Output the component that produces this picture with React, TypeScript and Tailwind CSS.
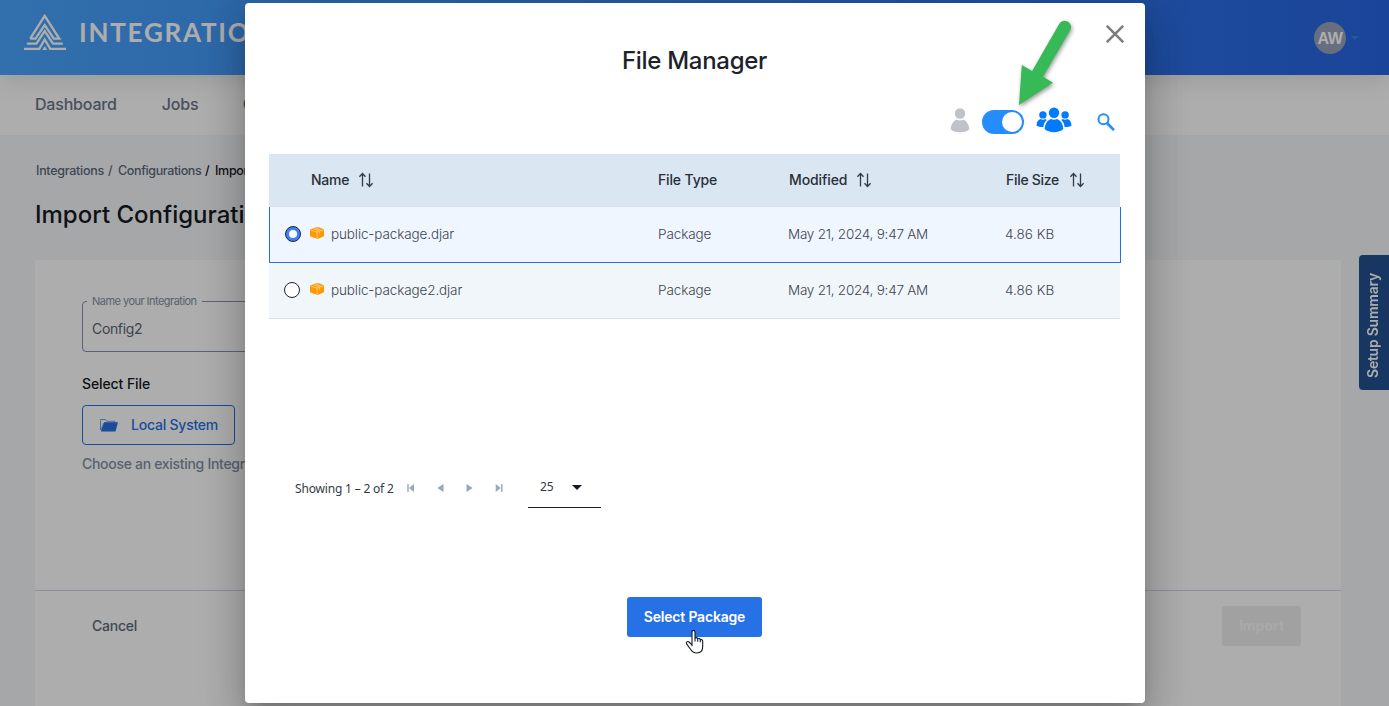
const columns = "grid grid-cols-[389px_130px_217px_1fr]";

function SortIcon() {
  return (
    <svg width="16" height="16" viewBox="0 0 16 16" fill="none" stroke="#343b45" strokeWidth="1.3" className="mt-px">
      <path d="M4.5 14.5V1.6M1.4 4.700 4.500 1.500l3 3.200M11.500 1.500v12.900M8.500 11.300l3 3.200 3.100-3.200" />
    </svg>
  );
}

function PackageIcon() {
  return (
    <svg width="14" height="12" viewBox="0 0 14 12">
      <path d="M0 2.400 6 .2h3l5 2.100v6.900L7.500 12 0 9.200Z" fill="#ff9800" />
      <path d="M.3 2.900 7.100 5.100 13.700 2.800M7.100 5.100v6.700M3.100 1.600l6.600 2.600v3M5.400.9l6.400 2.500" fill="none" stroke="#ffd9a0" strokeWidth=".7" />
    </svg>
  );
}

function Logo() {
  return (
    <svg width="42" height="36" viewBox="0 0 42 36" fill="none" stroke="#fff" strokeWidth="2.3">
      <path d="M6.200 24.600 20.700 1.800l14.600 22.800h-5.400L20.700 11l-9.200 13.600H6.200" />
      <path d="M2.800 29.600h9.600l8.300-12.500L29 29.600h9.800" />
      <path d="M0 34.800h15.300l5.400-9.300 5.500 9.300H42" />
      <path d="m18.300 36 2.400-4 2.500 4Z" fill="#fff" stroke="none" />
    </svg>
  );
}

function PageBehind() {
  return (
    <div className="flex h-full w-full flex-col overflow-hidden bg-[#f5f7fa]">
      <header className="z-10 flex h-[75px] shrink-0 items-start bg-linear-to-r from-[#4aa5ff] via-[#3883ee] to-[#2765e3] shadow-[0_4px_24px_rgba(0,0,0,0.12)]">
        <div className="flex flex-1 pt-[14px] pl-[24px]">
          <Logo />
          <span className="mt-[-2px] ml-[13px] font-['Lato',sans-serif] text-[26px] leading-[40px] font-bold tracking-[1.75px] text-white">
            INTEGRATION
          </span>
        </div>
        <div className="mt-[22px] mr-[30px] flex items-center gap-[5px]">
          <div className="flex size-8 items-center justify-center rounded-full bg-[#99a3b8] pt-px font-['Liberation_Sans',sans-serif] text-[16px] font-bold tracking-[-0.3px] text-white">
            AW
          </div>
          <svg width="8" height="4" viewBox="0 0 8 4"><path d="M0 0h8L4 4Z" fill="#2f8ae6" /></svg>
        </div>
      </header>
      <nav className="flex h-[60px] shrink-0 items-center gap-[45px] bg-white pb-[2px] pl-[35px] text-[16px] font-medium text-[#6a7688]">
        <span className="tracking-[-0.2px]">Dashboard</span>
        <span className="tracking-[-0.1px]">Jobs</span>
        <span className="ml-[-1px]">Configure</span>
      </nav>
      <div className="flex h-[125px] shrink-0 flex-col pl-[35px]">
        <div className="mt-[27px] flex pl-px text-[12.5px] leading-[18px] font-medium text-[#5d697b]">
          <span className="w-[72px] tracking-[-0.28px]">Integrations</span>
          <span className="w-[10px]">/</span>
          <span className="w-[87px] tracking-[-0.37px]">Configurations</span>
          <span className="w-[10px] text-[#151a22]">/</span>
          <span className="tracking-[-0.3px] text-[#151a22]">Import</span>
        </div>
        <h1 className="mt-[18px] text-[24px] leading-[34px] font-medium text-[#151a22]">Import Configuration</h1>
      </div>
      <div className="flex min-h-0 flex-1">
        <main className="ml-[35px] flex w-[1306px] flex-col bg-white">
          <div className="flex h-[331px] shrink-0 flex-col items-start border-b border-[#ced3e4] pl-[47px]">
            <fieldset className="mt-[32px] h-[60px] w-[560px] rounded-[4px] border border-[#8792ad] pl-[9px]">
              <legend className="ml-[-5px] px-[5px] text-[11px] leading-[18px] tracking-[-0.53px] text-[#8490a2]">Name your Integration</legend>
              <div className="pt-[9px] text-[14px] leading-[20px] tracking-[-0.35px] text-[#5c6370]">Config2</div>
            </fieldset>
            <h2 className="mt-[22px] text-[14px] leading-[20px] font-medium tracking-[-0.1px] text-[#151a22]">Select File</h2>
            <button className="mt-[11px] flex h-[40px] w-[153px] items-center rounded-[4px] border border-[#2671e5] pl-[17px] text-[14px] font-medium tracking-[-0.22px] text-[#2671e5]">
              <svg width="18" height="14" viewBox="0 0 18 14" className="mr-[13px]">
                <path d="M.5 12V1.500h5l1.500 1.800h8V5H4Z" fill="none" stroke="#2671e5" strokeOpacity=".65" />
                <path d="M4.200 4.200H18L15.500 13.500H.8Z" fill="#2671e5" />
              </svg>
              <span className="pb-[2px]">Local System</span>
            </button>
            <p className="mt-[9px] text-[14px] leading-[20px] font-medium tracking-[-0.3px] whitespace-nowrap text-[#8490a2]">
              Choose an existing Integration
            </p>
          </div>
          <div className="flex items-center justify-between pt-[15px] pr-[40px] pl-[57px]">
            <span className="pb-[2px] text-[14px] font-medium tracking-[-0.25px] text-[#5d697b]">Cancel</span>
            <button className="h-[40px] w-[79px] rounded-[3px] bg-[#ededed] pb-[2px] text-[14px] font-bold text-[#fafafa]">Import</button>
          </div>
        </main>
        <aside className="mt-[-5px] ml-[18px] flex h-[135px] w-[30px] items-center justify-center rounded-l-[4px] bg-[#22508f] pt-[5px] pr-[4px] text-white">
          <span className="rotate-180 text-[14px] font-semibold tracking-[-0.24px] whitespace-nowrap [writing-mode:vertical-rl]">Setup Summary</span>
        </aside>
      </div>
    </div>
  );
}

function FileRow({ name, selected }: { name: string; selected?: boolean }) {
  return (
    <div
      className={
        columns +
        " h-[56px] items-center border-b text-[13.5px] font-light text-[#3f4550] " +
        (selected ? "mr-[-1px] border-x border-[#2671d8] bg-[#eff6ff]" : "border-[#dbe1e8] bg-[#f1f6fa]")
      }
    >
      <div className="flex items-center pl-[15px]">
        {selected ? (
          <span className="mb-[2px] flex size-4 items-center justify-center rounded-full border border-[#1c2733] bg-[#3b82f6]">
            <span className="size-2 rounded-full bg-white" />
          </span>
        ) : (
          <span className="mb-[2px] size-4 rounded-full border border-[#1c2430] bg-white" />
        )}
        <span className={selected ? "ml-[9px] pb-[3px]" : "ml-[10px] pb-[3px]"}><PackageIcon /></span>
        <span className="ml-[7px] tracking-[-0.12px]">{name}</span>
      </div>
      <span className={selected ? "ml-[-1px] tracking-[-0.1px]" : "tracking-[-0.1px]"}>Package</span>
      <span className={selected ? "ml-[-1px] tracking-[-0.25px]" : "tracking-[-0.25px]"}>May 21, 2024, 9:47 AM</span>
      <span className={selected ? "ml-[-1px]" : ""}>4.86 KB</span>
    </div>
  );
}

function FileManager() {
  return (
    <section className="flex h-[700px] w-[900px] flex-col rounded-[4px] bg-white shadow-[0_11px_15px_-7px_rgba(0,0,0,0.2),0_24px_38px_3px_rgba(0,0,0,0.14),0_9px_46px_8px_rgba(0,0,0,0.12)]">
      <div className="flex h-[44px] items-start justify-end pt-[22px] pr-[21px]">
        <svg width="18" height="18" viewBox="0 0 18 18" stroke="#7c7c7c" strokeWidth="2.500"><path d="m.8.8 16.400 16.400M17.200.8.8 17.200" /></svg>
      </div>
      <h2 className="mr-[1px] text-center text-[24px] leading-[28px] font-medium tracking-[-0.3px] text-[#1d222a]">File Manager</h2>
      <div className="flex h-[79px] items-start justify-end pt-[32px] pr-[30px]">
        <svg width="20" height="26" viewBox="0 0 20 26" fill="#bfc2c9">
          <circle cx="10" cy="6.500" r="5.200" />
          <path d="M.6 22C1.300 15.800 5 12.800 7 12.700c2 .9 4 .9 6 0 2 .1 5.700 3.100 6.400 9.300-3 4.300-15.800 4.300-18.800 0Z" />
        </svg>
        <div className="mt-[3px] ml-[12px] flex h-[24px] w-[42px] items-center justify-end rounded-full bg-[#258cfb] pr-[2px]">
          <div className="size-[20px] rounded-full bg-white" />
        </div>
        <svg width="36" height="26" viewBox="0 0 36 26" fill="#007bff" className="ml-[12px]">
          <circle cx="6.900" cy="7.900" r="3.700" />
          <circle cx="29.100" cy="7.900" r="3.700" />
          <path d="M.5 18.400C.7 14.800 2.300 12.900 4.600 12.100c1.600.8 3 .8 4.600 0l1.500.8c-2.100 2-3.100 4.200-3.300 7.200-2.800.1-5.200-.4-6.900-1.700ZM35.500 18.400c-.2-3.600-1.800-5.500-4.100-6.300-1.600.8-3 .8-4.600 0l-1.500.8c2.100 2 3.100 4.200 3.300 7.200 2.800.1 5.200-.4 6.900-1.700Z" />
          <circle cx="18" cy="5.700" r="5.200" />
          <path d="M8.700 22c.4-5.600 3.200-9 6.300-9.900 2 .9 4 .9 6 0 3.100.9 5.900 4.300 6.300 9.900-3.900 4.200-14.700 4.200-18.600 0Z" />
        </svg>
        <svg width="18" height="18" viewBox="0 0 18 18" fill="none" stroke="#258cfb" className="mt-[6px] ml-[25px]">
          <circle cx="6.500" cy="6.300" r="5" strokeWidth="2" />
          <path d="m10.200 10.200 6.800 6.900" strokeWidth="2.700" />
        </svg>
      </div>
      <div className="ml-[24px] flex w-[851px] flex-col">
        <div className={columns + " h-[53px] items-center border-b border-[#d6dfe8] bg-[#dae6f1] pb-px text-[14px] font-medium text-[#293039]"}>
          <div className="flex items-center gap-[9px] pl-[42px]"><span className="tracking-[-0.25px]">Name</span><SortIcon /></div>
          <span className="tracking-[-0.15px]">File Type</span>
          <div className="flex items-center gap-[9px]"><span className="ml-[1px] tracking-[-0.1px]">Modified</span><SortIcon /></div>
          <div className="flex items-center gap-[10px]"><span className="ml-[1px] tracking-[-0.3px]">File Size</span><SortIcon /></div>
        </div>
        <FileRow name="public-package.djar" selected />
        <FileRow name="public-package2.djar" />
      </div>
      <div className="mt-[149px] flex h-[40px] items-center pl-[50px] text-[#343a44]">
        <span className="w-[112px] pt-[2px] font-['Noto_Sans',sans-serif] text-[12px] tracking-[-0.18px]">Showing 1 – 2 of 2</span>
        <div className="mt-[-1px] flex w-[121px] items-center gap-[22px] text-[#9ca6b8]">
          <svg width="8" height="8" viewBox="0 0 8 8" fill="currentColor"><path d="M1.700 0v8H.3V0ZM7 0v8L2 4Z" /></svg>
          <svg width="7" height="8" viewBox="0 0 7 8" fill="currentColor"><path d="M6.500 0v8L.3 4Z" /></svg>
          <svg width="7" height="8" viewBox="0 0 7 8" fill="currentColor"><path d="M.5 0v8l6.200-4Z" /></svg>
          <svg width="8" height="8" viewBox="0 0 8 8" fill="currentColor"><path d="M6.200 0v8h1.400V0ZM.7 0v8l5-4Z" /></svg>
        </div>
        <div className="flex h-[40px] w-[73px] items-center border-b border-[#1c1c28] pl-[12px] font-['Noto_Sans',sans-serif] text-[12px]">
          <span className="w-[32px] pb-[2px]">25</span>
          <svg width="10" height="5" viewBox="0 0 10 5"><path d="M0 0h10L5 5Z" fill="#151a22" /></svg>
        </div>
      </div>
      <div className="relative mt-[89px] ml-[382px] h-[40px] w-[135px]">
        <button className="h-full w-full rounded-[3px] bg-[#2671e5] pb-[2px] text-[14px] font-semibold tracking-[-0.2px] text-white">Select Package</button>
        <svg width="20" height="26" viewBox="0 0 20 26" className="absolute top-[32px] left-[58px]">
          <path
            d="M7 17.200V2.900c0-2.100 3-2.100 3 0v6.200c.8-.9 2.500-.6 2.700.8.900-.8 2.400-.4 2.600.9 1-.7 2.400 0 2.400 1.400v5.300c0 3.900-2.200 6.500-6 6.500-3 0-4.700-1.300-6.200-3.700L1.600 14.900c-.9-1.600 1-3.200 2.400-1.900L7 15.900M10 9v3.500M12.700 9.800v3M15.300 10.700v2.600"
            fill="#fff" stroke="#111827" strokeWidth="1.100" strokeLinejoin="round"
          />
        </svg>
      </div>
    </section>
  );
}

export default function App() {
  return (
    <div className="relative h-[706px] w-full overflow-hidden font-['Inter',sans-serif]">
      <PageBehind />
      <div className="absolute inset-0 z-20 flex items-start justify-center bg-black/32 pt-[3px] pl-px">
        <FileManager />
      </div>
      <svg width="64" height="96" viewBox="0 0 64 96" className="absolute top-[14px] left-[1012px] z-30 drop-shadow-[1px_2px_2px_rgba(0,0,0,0.4)]">
        <path d="m7 91 2.800-40 10.300 6L47 10.200a6.300 6.300 0 0 1 11.300 5.900L31 62.700l10 6Z" fill="#37b958" />
      </svg>
    </div>
  );
}
